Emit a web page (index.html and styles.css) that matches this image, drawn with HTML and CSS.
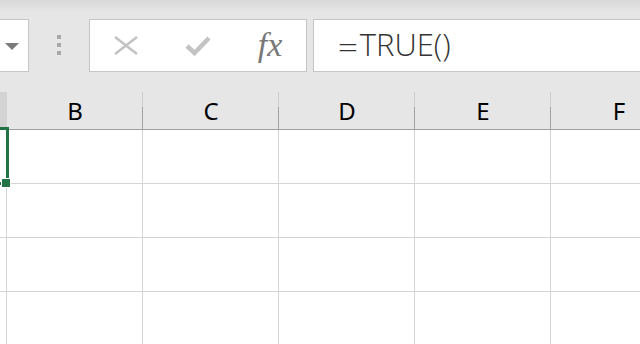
FILE: index.html
```html
<!DOCTYPE html>
<html lang="en">
<head>
  <meta charset="UTF-8">
  <title>Formula bar</title>
  <link rel="stylesheet" href="styles.css">
</head>
<body>

  <!-- Formula bar -->
  <div class="toolbar">
    <div class="name-box"><span class="caret"></span></div>
    <div class="grip"><i></i><i></i><i></i></div>
    <div class="buttons">
      <span class="btn">
        <svg width="24" height="19" viewBox="0 0 24 19">
          <path d="M1 1 L23 18 M1 18 L23 1" stroke="#c3c3c3" stroke-width="2.6" fill="none"/>
        </svg>
      </span>
      <span class="btn">
        <svg width="26" height="20" viewBox="0 0 26 20">
          <path d="M2 10 L9.5 17 L24 2" stroke="#c3c3c3" stroke-width="4.5" fill="none"/>
        </svg>
      </span>
      <span class="btn fx">fx</span>
    </div>
    <div class="formula"><span class="eq">=</span>TRUE()</div>
  </div>

  <!-- Grid -->
  <div class="sheet">
    <div class="head col-a"></div>
    <div class="head">B</div>
    <div class="head">C</div>
    <div class="head">D</div>
    <div class="head">E</div>
    <div class="head">F</div>

    <div class="cell"></div><div class="cell"></div><div class="cell"></div>
    <div class="cell"></div><div class="cell"></div><div class="cell"></div>
    <div class="cell"></div><div class="cell"></div><div class="cell"></div>
    <div class="cell"></div><div class="cell"></div><div class="cell"></div>
    <div class="cell"></div><div class="cell"></div><div class="cell"></div>
    <div class="cell"></div><div class="cell"></div><div class="cell"></div>
    <div class="cell"></div><div class="cell"></div><div class="cell"></div>
    <div class="cell"></div><div class="cell"></div><div class="cell"></div>

    <!-- active cell A1 -->
    <div class="selection"></div>
    <div class="handle"></div>
  </div>

</body>
</html>
```

FILE: styles.css
```css
body {
  margin: 0;
  width: 640px;
  height: 344px;
  overflow: hidden;
  background-color: #fff;
  font-family: "Noto Sans", sans-serif;
}

/* Formula bar */
.toolbar {
  display: flex;
  align-items: flex-start;
  height: 92px;
  padding-top: 19px;
  box-sizing: border-box;
  background: linear-gradient(to bottom, #d8d8d8 0px, #e6e6e6 12px);
}

.name-box {
  display: flex;
  align-items: center;
  justify-content: flex-end;
  width: 39px;
  height: 53px;
  margin-left: -10px;
  padding-right: 9px;
  box-sizing: border-box;
  background-color: #fff;
  border: 1px solid #c6c6c6;
}

.caret {
  width: 0;
  height: 0;
  border-left: 7px solid transparent;
  border-right: 7px solid transparent;
  border-top: 7px solid #7a7a7a;
  margin-top: 2px;
}

.grip {
  display: flex;
  flex-direction: column;
  gap: 4px;
  margin-left: 28px;
  margin-top: 16px;
}

.grip i {
  width: 4px;
  height: 4px;
  background-color: #a8a8a8;
}

.buttons {
  display: flex;
  width: 218px;
  height: 53px;
  margin-left: 28px;
  box-sizing: border-box;
  background-color: #fff;
  border: 1px solid #c6c6c6;
}

.btn {
  display: flex;
  align-items: center;
  justify-content: center;
  width: 72px;
  height: 100%;
}

.btn.fx {
  font-family: "Liberation Serif", serif;
  font-style: italic;
  font-size: 34px;
  color: #787878;
  padding-bottom: 2px;
  box-sizing: border-box;
}

.formula {
  flex: 1;
  height: 53px;
  margin-left: 6px;
  margin-right: -10px;
  padding-left: 25px;
  box-sizing: border-box;
  background-color: #fff;
  border: 1px solid #c6c6c6;
  font-family: "Open Sans", sans-serif;
  font-weight: 300;
  font-size: 31px;
  line-height: 49px;
  color: #333;
}

.formula .eq {
  display: inline-block;
  transform: translateY(3px) scaleX(1.15);
  margin-right: 3px;
}

/* Grid */
.sheet {
  position: relative;
  display: grid;
  grid-template-columns: 7px repeat(5, 136px);
  grid-template-rows: 38px repeat(4, 54px);
  height: 252px;
  overflow: hidden;
}

.head {
  display: flex;
  align-items: center;
  justify-content: center;
  background: #e6e6e6 linear-gradient(to bottom, #cdcdcd 0 15px, #a3a3a3 15px) right / 1px 100% no-repeat;
  border-bottom: 1px solid #9e9e9e;
  font-size: 24px;
  color: #000;
}

.head.col-a {
  background: #d3d3d3;
}

.cell {
  border-right: 1px solid #d4d4d4;
  border-bottom: 1px solid #d4d4d4;
}

.selection {
  position: absolute;
  left: -10px;
  top: 35px;
  width: 19px;
  height: 58px;
  box-sizing: border-box;
  border: 3px solid #217346;
}

.handle {
  position: absolute;
  left: 1px;
  top: 86px;
  width: 10px;
  height: 10px;
  box-sizing: border-box;
  background-color: #217346;
  border: 1px solid #fff;
}
```
